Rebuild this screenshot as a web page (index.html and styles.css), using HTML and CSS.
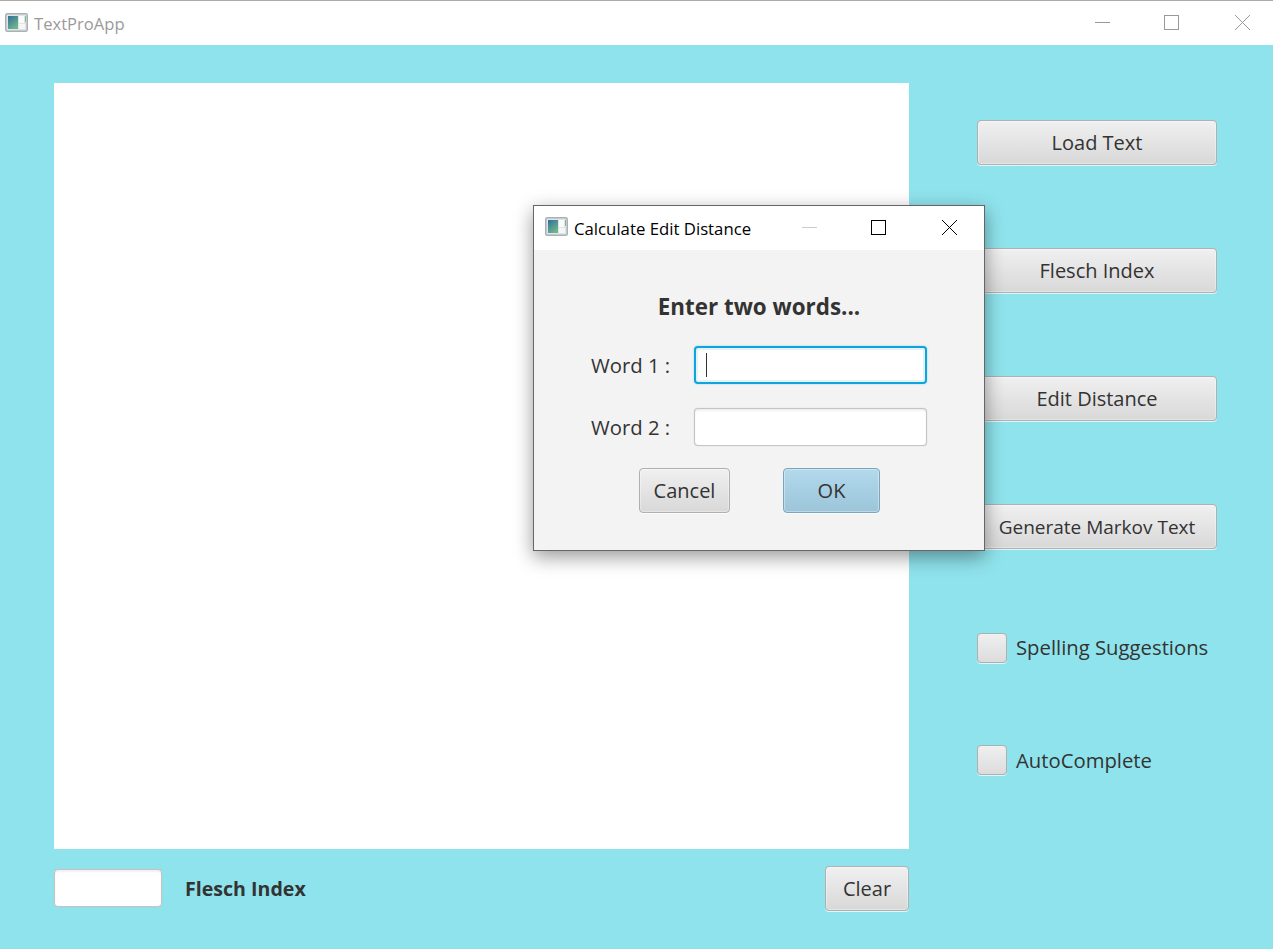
FILE: index.html
```html
<!DOCTYPE html>
<html lang="en">
<head>
<meta charset="UTF-8">
<title>TextProApp</title>
<link rel="stylesheet" href="styles.css">
</head>
<body>
<div class="app">
    <div class="titlebar">
        <svg class="app-icon" width="24" height="20" viewBox="0 0 24 20">
            <defs>
                <linearGradient id="icon-fill" x1="0" y1="0" x2="0.6" y2="1">
                    <stop offset="0" stop-color="#2f6f9c"/>
                    <stop offset="1" stop-color="#6fb58a"/>
                </linearGradient>
            </defs>
            <rect x="0.75" y="0.75" width="21.5" height="17.5" rx="1.5" fill="#dfe4e6" stroke="#a9b1b5" stroke-width="1.5"/>
            <rect x="3" y="3" width="10" height="13" fill="url(#icon-fill)"/>
            <rect x="14" y="3" width="5" height="7" fill="#fafafa"/>
            <rect x="20" y="3" width="1" height="6" fill="#7fb894"/>
            <rect x="14" y="11" width="6" height="5" fill="#f6f6f6"/>
        </svg>
        <span class="window-title">TextProApp</span>
        <div class="controls">
            <svg class="control" width="15" height="15" viewBox="0 0 15 15"><path d="M0 7.5H15" stroke="#999" fill="none"/></svg>
            <svg class="control" width="15" height="15" viewBox="0 0 15 15"><rect x="0.5" y="0.5" width="14" height="14" stroke="#999" fill="none"/></svg>
            <svg class="control" width="15" height="15" viewBox="0 0 15 15"><path d="M0 0L15 15M15 0L0 15" stroke="#999" fill="none"/></svg>
        </div>
    </div>

    <div class="main">
        <div class="left">
            <div class="text-area"></div>
            <div class="bottom-row">
                <div class="field flesch-field"></div>
                <span class="flesch-label">Flesch Index</span>
                <button class="btn clear-btn">Clear</button>
            </div>
        </div>
        <div class="right">
            <button class="btn side-btn">Load Text</button>
            <button class="btn side-btn">Flesch Index</button>
            <button class="btn side-btn">Edit Distance</button>
            <button class="btn side-btn markov-btn">Generate Markov Text</button>
            <div class="check-row first"><span class="check"></span><span class="check-label">Spelling Suggestions</span></div>
            <div class="check-row"><span class="check"></span><span>AutoComplete</span></div>
        </div>
    </div>

    <div class="dialog">
        <div class="dialog-bar">
            <svg class="dialog-icon" width="24" height="20" viewBox="0 0 24 20">
                <rect x="0.75" y="0.75" width="21.5" height="17.5" rx="1.5" fill="#dfe4e6" stroke="#a9b1b5" stroke-width="1.5"/>
                <rect x="3" y="3" width="10" height="13" fill="url(#icon-fill)"/>
                <rect x="14" y="3" width="5" height="7" fill="#fafafa"/>
                <rect x="20" y="3" width="1" height="6" fill="#7fb894"/>
                <rect x="14" y="11" width="6" height="5" fill="#f6f6f6"/>
            </svg>
            <span class="dialog-title">Calculate Edit Distance</span>
            <div class="dialog-controls">
                <svg width="15" height="15" viewBox="0 0 15 15"><path d="M0 7.5H15" stroke="#ccc" fill="none"/></svg>
                <svg width="15" height="15" viewBox="0 0 15 15"><rect x="0.5" y="0.5" width="14" height="14" stroke="#000" fill="none"/></svg>
                <svg width="15" height="15" viewBox="0 0 15 15"><path d="M0 0L15 15M15 0L0 15" stroke="#000" fill="none"/></svg>
            </div>
        </div>
        <div class="dialog-body">
            <h2 class="dialog-heading">Enter two words...</h2>
            <div class="word-row">
                <span class="word-label">Word 1 :</span>
                <div class="field word-field focused"><span class="caret"></span></div>
            </div>
            <div class="word-row">
                <span class="word-label">Word 2 :</span>
                <div class="field word-field"></div>
            </div>
            <div class="dialog-buttons">
                <button class="btn cancel-btn">Cancel</button>
                <button class="btn ok-btn">OK</button>
            </div>
        </div>
    </div>
</div>
</body>
</html>
```

FILE: styles.css
```css
* {
    box-sizing: border-box;
}
body {
    margin: 0;
    font-family: 'Open Sans', 'Noto Sans', sans-serif;
    color: #333;
}
.app {
    position: relative;
    width: 1273px;
    height: 949px;
    overflow: hidden;
    background-color: #8fe3ec;
}
.titlebar {
    display: flex;
    align-items: center;
    height: 45px;
    padding-left: 5px;
    background-color: #fff;
    border-top: 1px solid #aaa;
}
.app-icon {
    margin-top: -1px;
}
.window-title {
    margin-left: 5px;
    font-size: 16.6px;
    color: #9a9a9a;
}
.controls {
    display: flex;
    gap: 54px;
    margin-left: auto;
    margin-right: 23px;
    margin-top: -2px;
}
.control {
    display: block;
}
.control:last-child {
    margin-left: 2px;
}
.main {
    display: flex;
    padding: 38px 56px 0 54px;
}
.left {
    width: 855px;
    margin-right: 68px;
}
.text-area {
    height: 766px;
    background-color: #fff;
}
.bottom-row {
    display: flex;
    align-items: center;
    margin-top: 17px;
}
.field {
    background-color: #fff;
    border: 1px solid #c4c4c4;
    border-radius: 4px;
    box-shadow: inset 0 2px 2px #f0f0f0, 0 0 1px #c4c4c4;
}
.flesch-field {
    width: 108px;
    height: 38px;
    margin-bottom: 2px;
}
.flesch-label {
    margin-left: 23px;
    font-size: 19.6px;
    font-weight: 700;
}
.btn {
    height: 45px;
    padding: 0;
    font-family: inherit;
    font-size: 20px;
    color: #333;
    background: linear-gradient(#f0f0f0, #d8d8d8);
    border: 1px solid #b0b0b0;
    border-radius: 4px;
    box-shadow: 0 1px 0 rgba(255,255,255,0.7), inset 0 0 0 1px rgba(255,255,255,0.35);
}
.clear-btn {
    width: 84px;
    margin-left: auto;
}
.right {
    display: flex;
    flex-direction: column;
    width: 240px;
    padding-top: 37px;
}
.side-btn {
    width: 240px;
    margin-bottom: 83px;
}
.markov-btn {
    margin-bottom: 0;
    font-size: 19px;
}
.check-row {
    display: flex;
    align-items: center;
    gap: 9px;
    height: 30px;
    margin-bottom: 82px;
    font-size: 20.3px;
}
.check-row.first {
    margin-top: 84px;
}
.check-label {
    margin-top: -2px;
}
.check {
    width: 30px;
    height: 30px;
    background: linear-gradient(#f0f0f0, #dcdcdc);
    border: 1px solid #b0b0b0;
    border-radius: 4px;
    box-shadow: 0 1px 0 rgba(255,255,255,0.7);
}

/* dialog sits on top of the main window */
.dialog {
    position: absolute;
    left: 533px;
    top: 205px;
    width: 452px;
    height: 346px;
    background-color: #f3f3f3;
    border: 1px solid #666;
    box-shadow: 0 6px 18px rgba(0,0,0,0.4);
}
.dialog-bar {
    display: flex;
    align-items: center;
    height: 44px;
    padding-left: 11px;
    background-color: #fff;
}
.dialog-icon {
    margin-top: -2px;
}
.dialog-title {
    margin-left: 5px;
    font-size: 16.75px;
    color: #000;
}
.dialog-controls {
    display: flex;
    gap: 54px;
    margin-left: auto;
    margin-right: 27px;
    margin-top: -1px;
}
.dialog-controls svg {
    display: block;
}
.dialog-controls svg:last-child {
    margin-left: 2px;
}
.dialog-body {
    padding-top: 40px;
}
.dialog-heading {
    margin: 0 0 23px;
    height: 33px;
    line-height: 33px;
    text-align: center;
    font-size: 22.4px;
    font-weight: 700;
}
.word-row {
    display: flex;
    align-items: center;
    height: 38px;
    margin-bottom: 24px;
    padding-left: 57px;
}
.word-label {
    width: 103px;
    font-size: 20.3px;
}
.word-field {
    position: relative;
    width: 233px;
    height: 38px;
}
.word-field.focused {
    border: 2px solid #0ea5dc;
    box-shadow: inset 0 0 0 2px #e4f3f9, 0 0 2px #8fd3ee;
}
.caret {
    position: absolute;
    left: 10px;
    top: 5px;
    width: 1px;
    height: 24px;
    background-color: #333;
}
.dialog-buttons {
    display: flex;
    gap: 53px;
    margin-top: -2px;
    padding-left: 105px;
}
.cancel-btn {
    width: 91px;
}
.ok-btn {
    width: 97px;
    background: linear-gradient(#b2d9ec, #9cc5da);
    border-color: #7da5ba;
}
```
